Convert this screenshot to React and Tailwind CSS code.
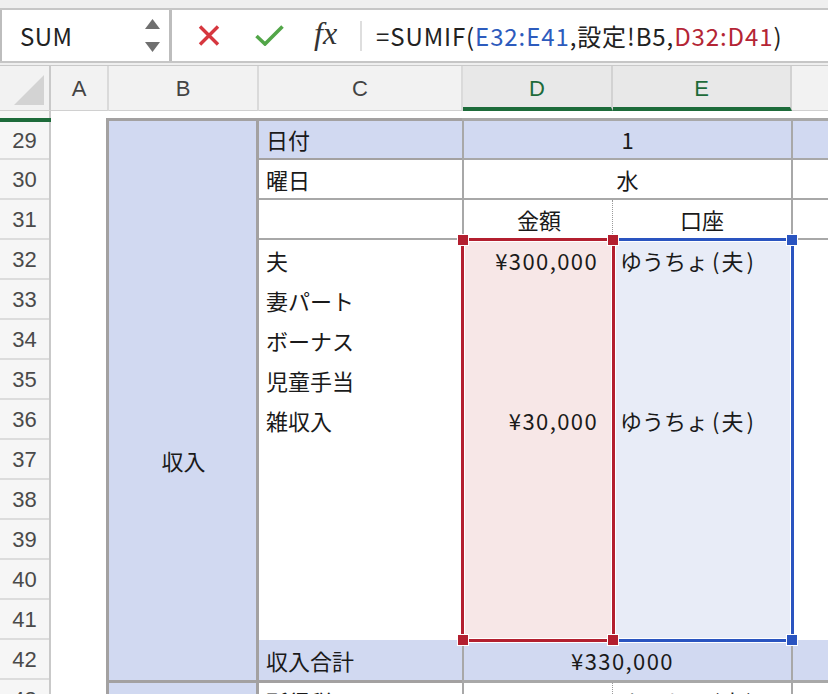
const FRAME = 'border-[#a3a1a1]';
const LINE = 'border-[#a8a8a8]';

const Yen = ({children}) => <span className="tracking-[1.4px]">{children}</span>;
const Account = () => (
    <span>ゆうちょ<span className="ml-[4px] mr-[2px]">(</span>夫<span className="ml-[3px]">)</span></span>
);

const incomeRows = [
    {label: '夫', amount: '¥300,000', account: true},
    {label: '妻パート', amount: '', account: false},
    {label: 'ボーナス', amount: '', account: false},
    {label: '児童手当', amount: '', account: false},
    {label: '雑収入', amount: '¥30,000', account: true},
    {label: '', amount: '', account: false},
    {label: '', amount: '', account: false},
    {label: '', amount: '', account: false},
    {label: '', amount: '', account: false},
    {label: '', amount: '', account: false},
];

const rowNumbers = [29, 30, 31, 32, 33, 34, 35, 36, 37, 38, 39, 40, 41, 42, 43];

const FormulaBar = () => {
    return (
        <div className="bg-[#efefef] pt-[8px] pb-[2px] border-b border-[#c9c9c9]">
            <div className="flex h-[55px] border-y-2 border-[#c6c6c6] bg-white">
                <div className="w-[172px] flex items-center border-l-2 border-r-[3px] border-[#bdbdbd] pl-[18px] pr-[9px]">
                    <span className="flex-1 text-[24px] tracking-[0.5px] text-[#222]">SUM</span>
                    <svg width="15" height="34" viewBox="0 0 15 34">
                        <polygon points="7.5,0 15,10 0,10" fill="#6f6f6f"/>
                        <polygon points="0,23 15,23 7.5,33" fill="#6f6f6f"/>
                    </svg>
                </div>
                <div className="flex-1 flex items-center pl-[26px]">
                    <svg width="22" height="21" viewBox="0 0 22 21">
                        <path d="M2 1.5 L20 19.5 M20 1.5 L2 19.5" stroke="#d6373f" strokeWidth="3.4" strokeLinecap="butt"/>
                    </svg>
                    <svg width="29" height="21" viewBox="0 0 29 21" className="ml-[35px]">
                        <path d="M1.5 11 L10 19 L27.5 1.5" stroke="#52a648" strokeWidth="3.6" fill="none"/>
                    </svg>
                    <span className="ml-[30px] w-[32px] text-[32px] leading-none italic text-[#333] font-['Liberation_Serif',serif] -mt-[5px]">fx</span>
                    <div className="ml-[14px] w-[2px] h-[30px] bg-[#dedede]"/>
                    <div className="ml-[14px] text-[24px] tracking-[0.9px] text-[#222] whitespace-nowrap">
                        =SUMIF(<span className="text-[#2d5bbd]">E32:E41</span>,設定!B5,<span className="text-[#b42535]">D32:D41</span>)
                    </div>
                </div>
            </div>
        </div>
    );
};

const ColumnHeaders = () => {
    return (
        <div className="flex h-[45px] bg-[#f2f2f2] text-[22px] text-[#444] font-['Liberation_Sans',sans-serif]">
            <div className="w-[51px] shrink-0 border-r-2 border-[#c9c9c9] border-b border-b-[#d0d0d0] flex items-end justify-end pr-[5px] pb-[5px]">
                <svg width="30" height="30" viewBox="0 0 30 30">
                    <polygon points="30,0 30,30 0,30" fill="#d3d3d3"/>
                </svg>
            </div>
            <div className="w-[58px] shrink-0 border-r-2 border-[#dadada] border-b border-b-[#d0d0d0] flex items-center justify-center">A</div>
            <div className="w-[150px] shrink-0 border-r-2 border-[#dadada] border-b border-b-[#d0d0d0] flex items-center justify-center">B</div>
            <div className="w-[204px] shrink-0 border-r-2 border-[#dadada] border-b border-b-[#d0d0d0] flex items-center justify-center">C</div>
            <div className="w-[150px] shrink-0 bg-[#e8e8e8] border-r-2 border-[#d2d2d2] border-b-4 border-b-[#1d6b3a] flex items-center justify-center text-[#1d6b3a] pt-[3px]">D</div>
            <div className="w-[179px] shrink-0 bg-[#e8e8e8] border-r-2 border-[#d2d2d2] border-b-4 border-b-[#1d6b3a] flex items-center justify-center text-[#1d6b3a] pt-[3px]">E</div>
            <div className="flex-1 border-b border-[#d0d0d0]"/>
        </div>
    );
};

const RowHeaders = () => {
    return (
        <div className="w-[51px] shrink-0 border-r-2 border-[#c9c9c9] bg-[#f6f6f6] flex flex-col text-[22px] text-[#4a4a4a] font-['Liberation_Sans',sans-serif]">
            <div className="h-[7px] shrink-0"/>
            <div className="h-[4px] shrink-0 bg-[#1d6b3a] -mr-[2px]"/>
            {rowNumbers.map((n, i) => (
                <div key={n}
                     className={(i === 0 ? 'h-[38px] ' : 'h-[40px] ') + 'shrink-0 border-b-2 border-[#dcdcdc] flex items-center justify-center'}>
                    {n}
                </div>
            ))}
        </div>
    );
};

const Dotted = () => <div className="w-0 self-stretch border-l border-dotted border-[#9a9a9a]"/>;

const Sheet = () => {
    return (
        <div className="relative flex-1 pt-[7px]">
            <div className="grid grid-cols-[55px_153px_203px_151px_178px_1fr] grid-rows-[42px_repeat(14,40px)] text-[22px] text-[#1a1a1a]">
                {/* column A */}
                <div className="col-start-1 row-start-1 row-span-15"/>

                {/* column B */}
                <div className={'col-start-2 row-start-1 row-span-3 bg-[#d1d9f1] border-t-[3px] border-x-[3px] ' + FRAME}/>
                <div className={'col-start-2 row-start-4 row-span-11 bg-[#d1d9f1] border-x-[3px] flex items-center justify-center pl-[2px] ' + FRAME}>
                    収入
                </div>
                <div className={'col-start-2 row-start-15 bg-[#d1d9f1] border-t-[3px] border-x-[3px] ' + FRAME}/>

                {/* row 29 */}
                <div className={'col-start-3 row-start-1 bg-[#d1d9f1] border-t-[3px] border-b-2 flex items-center pl-[7px] ' + FRAME}>日付</div>
                <div className={'col-start-4 col-span-2 row-start-1 bg-[#d1d9f1] border-t-[3px] border-b-2 border-l-2 flex items-center justify-center ' + LINE}>1</div>
                <div className={'col-start-6 row-start-1 bg-[#d1d9f1] border-t-[3px] border-b-2 border-l-2 ' + LINE}/>

                {/* row 30 */}
                <div className={'col-start-3 row-start-2 border-b-2 flex items-center pl-[7px] ' + LINE}>曜日</div>
                <div className={'col-start-4 col-span-2 row-start-2 border-b-2 border-l-2 flex items-center justify-center ' + LINE}>水</div>
                <div className={'col-start-6 row-start-2 border-b-2 border-l-2 ' + LINE}/>

                {/* row 31 */}
                <div className={'col-start-3 row-start-3 border-b-2 ' + LINE}/>
                <div className={'col-start-4 row-start-3 border-b-2 border-l-2 flex ' + LINE}>
                    <div className="flex-1 flex items-center justify-center pl-[2px]">金額</div>
                    <Dotted/>
                </div>
                <div className={'col-start-5 row-start-3 border-b-2 flex items-center justify-center ' + LINE}>口座</div>
                <div className={'col-start-6 row-start-3 border-b-2 border-l-2 ' + LINE}/>

                {/* rows 32 - 41 */}
                {incomeRows.map((r, i) => (
                    <div key={'c' + i} className="col-start-3 flex items-center pl-[7px]" style={{gridRowStart: i + 4}}>
                        {r.label}
                    </div>
                ))}
                {incomeRows.map((r, i) => (
                    <div key={'d' + i} className="col-start-4 bg-[#f7e7e7] flex items-center justify-end pr-[15px]" style={{gridRowStart: i + 4}}>
                        {r.amount && <Yen>{r.amount}</Yen>}
                    </div>
                ))}
                {incomeRows.map((r, i) => (
                    <div key={'e' + i} className="col-start-5 bg-[#e8ecf7] flex items-center pl-[7px]" style={{gridRowStart: i + 4}}>
                        {r.account && <Account/>}
                    </div>
                ))}
                <div className={'col-start-6 row-start-4 row-span-10 border-l-2 ' + LINE}/>

                {/* row 42 */}
                <div className="col-start-3 row-start-14 bg-[#d1d9f1] flex items-center pl-[7px]">収入合計</div>
                <div className={'col-start-4 col-span-2 row-start-14 bg-[#d1d9f1] border-l-2 flex items-center justify-center pr-[10px] ' + LINE}>
                    <Yen>¥330,000</Yen>
                </div>
                <div className={'col-start-6 row-start-14 bg-[#d1d9f1] border-l-2 ' + LINE}/>

                {/* row 43 */}
                <div className={'col-start-3 row-start-15 border-t-[3px] flex items-center pl-[7px] ' + FRAME}>所得税</div>
                <div className={'col-start-4 row-start-15 border-t-[3px] border-l-2 flex ' + LINE}>
                    <div className="flex-1 flex items-center justify-end pr-[15px]"><Yen>¥30,000</Yen></div>
                    <Dotted/>
                </div>
                <div className={'col-start-5 row-start-15 border-t-[3px] flex items-center pl-[7px] ' + LINE}><Account/></div>
                <div className={'col-start-6 row-start-15 border-t-[3px] border-l-2 ' + LINE}/>
            </div>

            {/* range highlight of the formula references */}
            <div className="absolute left-[561px] top-[127px] w-[182px] h-[404px] border-[3px] border-[#2a54c0] shadow-[0_0_0_1px_#fff,inset_0_0_0_1px_#fff]"/>
            <div className="absolute left-[410px] top-[127px] w-[154px] h-[404px] border-[3px] border-[#b31f2f] shadow-[0_0_0_1px_#fff,inset_0_0_0_1px_#fff]"/>
            <div className="absolute left-[406px] top-[123px] w-[12px] h-[12px] bg-[#b31f2f] border border-white"/>
            <div className="absolute left-[556px] top-[123px] w-[12px] h-[12px] bg-[#b31f2f] border border-white"/>
            <div className="absolute left-[406px] top-[523px] w-[12px] h-[12px] bg-[#b31f2f] border border-white"/>
            <div className="absolute left-[556px] top-[523px] w-[12px] h-[12px] bg-[#b31f2f] border border-white"/>
            <div className="absolute left-[735px] top-[123px] w-[12px] h-[12px] bg-[#2a54c0] border border-white"/>
            <div className="absolute left-[735px] top-[523px] w-[12px] h-[12px] bg-[#2a54c0] border border-white"/>
        </div>
    );
};

export default function App() {
    return (
        <div className="w-[828px] h-[694px] overflow-hidden bg-white font-['Noto_Sans_CJK_JP','Noto_Sans',sans-serif]">
            <FormulaBar/>
            <ColumnHeaders/>
            <div className="flex">
                <RowHeaders/>
                <Sheet/>
            </div>
        </div>
    );
}
